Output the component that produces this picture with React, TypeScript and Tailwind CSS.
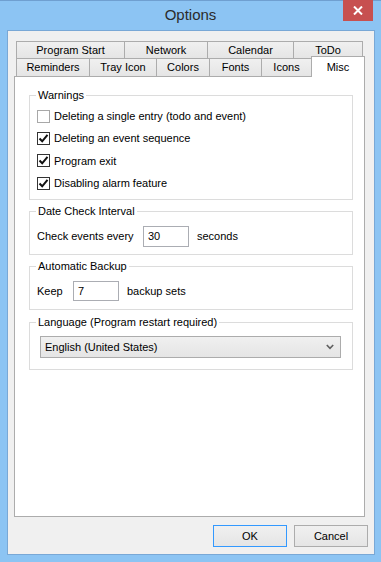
const font = { fontFamily: '"Liberation Sans", Arial, sans-serif' };

function Check({ on, label }: { on?: boolean; label: string }) {
  return (
    <div className="flex h-[22.33px] items-center">
      <span
        className={`flex h-[13px] w-[13px] shrink-0 items-center justify-center border bg-white ${
          on ? "border-[#333333]" : "border-[#a8a8a8]"
        }`}
      >
        {on && (
          <svg width="11" height="11" viewBox="0 0 11 11">
            <path d="M1.5 5.5 L4.2 8.3 L9.5 1.8" fill="none" stroke="#111" strokeWidth="2" />
          </svg>
        )}
      </span>
      <span className="ml-[4px]">{label}</span>
    </div>
  );
}

function Group({
  title,
  h,
  className = "",
  children,
}: {
  title: string;
  h: string;
  className?: string;
  children: React.ReactNode;
}) {
  return (
    <div className={`ml-[14px] w-[324px] border border-[#dcdcdc] ${h} ${className}`}>
      <div className="-mt-[8px] ml-[6px] w-fit bg-white px-[2px] leading-[14px]">{title}</div>
      <div className="pl-[7px]">{children}</div>
    </div>
  );
}

const row1 = [
  ["Program Start", "w-[108px]"],
  ["Network", "w-[83px]"],
  ["Calendar", "w-[86px]"],
  ["ToDo", "w-[70px] border-r"],
];

const row2 = [
  ["Reminders", "w-[73px]"],
  ["Tray Icon", "w-[67px]"],
  ["Colors", "w-[53px]"],
  ["Fonts", "w-[52px]"],
  ["Icons", "w-[50px]"],
];

export default function App() {
  return (
    <div
      className="flex h-[562px] w-[381px] flex-col border-t border-[#6f9fd0] bg-[#8cc4f3] px-[7px] text-[11px] text-black"
      style={font}
    >
      {/* title bar */}
      <div className="-mx-[7px] -mt-px flex h-[30px] shrink-0 items-start">
        <div className="flex h-[30px] flex-1 items-center justify-center pl-[38px] text-[15px] text-[#2b2b2b]">
          Options
        </div>
        <div className="mr-[8px] flex h-[21px] w-[30px] items-center justify-center bg-[#c75050]">
          <svg width="10" height="9" viewBox="0 0 10 9">
            <path d="M1 0.5 L9 8.5 M9 0.5 L1 8.5" stroke="#fff" strokeWidth="2" />
          </svg>
        </div>
      </div>

      {/* client area */}
      <div className="flex h-[525px] w-[368px] flex-col border border-[#79a8d6] bg-[#f0f0f0]">
        <div className="ml-[8px] mt-[10px] flex h-[17px]">
          {row1.map(([t, w]) => (
            <div
              key={t}
              className={`flex items-center justify-center border-l border-t border-[#acacac] bg-gradient-to-b from-[#f0f0f0] to-[#e5e5e5] ${w}`}
            >
              {t}
            </div>
          ))}
        </div>
        <div className="ml-[8px] flex h-[18px] items-end">
          {row2.map(([t, w]) => (
            <div
              key={t}
              className={`flex h-[18px] items-center justify-center border-l border-t border-[#acacac] bg-gradient-to-b from-[#f0f0f0] to-[#e5e5e5] ${w}`}
            >
              {t}
            </div>
          ))}
          <div className="relative z-10 -mb-px flex h-[21px] w-[54px] justify-center border-x border-t border-[#acacac] bg-white pt-[2px]">
            Misc
          </div>
        </div>

        {/* tab panel */}
        <div className="ml-[6px] h-[441px] w-[351px] border border-[#acacac] bg-white pt-[18px]">
          <Group title="Warnings" h="h-[105px]">
            <div className="mt-[3px]">
              <Check label="Deleting a single entry (todo and event)" />
              <Check on label="Deleting an event sequence" />
              <Check on label="Program exit" />
              <Check on label="Disabling alarm feature" />
            </div>
          </Group>

          <Group title="Date Check Interval" h="h-[44px]" className="mt-[11px]">
            <div className="mt-[8px] flex h-[21px] items-center">
              <span className="w-[106px]">Check events every</span>
              <span className="flex h-[21px] w-[46px] items-center border border-[#abadb3] pl-[4px]">30</span>
              <span className="ml-[8px]">seconds</span>
            </div>
          </Group>

          <Group title="Automatic Backup" h="h-[44px]" className="mt-[11px]">
            <div className="mt-[8px] flex h-[20px] items-center">
              <span className="w-[36px]">Keep</span>
              <span className="flex h-[20px] w-[46px] items-center border border-[#abadb3] pl-[4px]">7</span>
              <span className="ml-[8px]">backup sets</span>
            </div>
          </Group>

          <Group title="Language (Program restart required)" h="h-[48px]" className="mt-[12px]">
            <div className="ml-[3px] mt-[7px] flex h-[22px] w-[301px] items-center justify-between border border-[#acacac] bg-gradient-to-b from-[#f0f0f0] to-[#e5e5e5] pl-[4px] pr-[6px]">
              <span>English (United States)</span>
              <svg width="8" height="6" viewBox="0 0 8 6">
                <path d="M0.8 1 L4 4.4 L7.2 1" fill="none" stroke="#606060" strokeWidth="1.6" />
              </svg>
            </div>
          </Group>
        </div>

        {/* buttons */}
        <div className="mr-[6px] mt-[8px] flex justify-end gap-[7px]">
          <button className="h-[22px] w-[74px] border border-[#3399ff] bg-gradient-to-b from-[#f0f0f0] to-[#e5e5e5]">
            OK
          </button>
          <button className="h-[22px] w-[74px] border border-[#acacac] bg-gradient-to-b from-[#f0f0f0] to-[#e5e5e5]">
            Cancel
          </button>
        </div>
      </div>
    </div>
  );
}
